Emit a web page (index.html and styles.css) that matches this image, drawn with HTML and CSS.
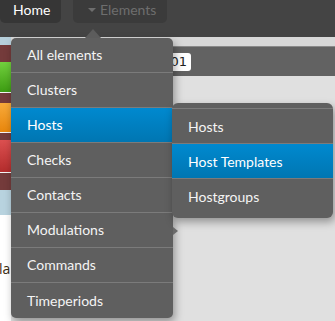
FILE: index.html
```html
<!DOCTYPE html>
<html>
<head>
<meta charset="utf-8">
<link rel="stylesheet" href="styles.css">
</head>
<body>
<div class="navbar">
  <a class="nav-btn home">Home</a>
  <a class="nav-btn elements"><span class="caret-down"></span>Elements</a>
</div>
<div class="page">
  <div class="strip">
    <div class="s s-blue1"></div>
    <div class="s s-dark h17"></div>
    <div class="s s-green"></div>
    <div class="s s-white1"></div>
    <div class="s s-dark h10"></div>
    <div class="s s-orange"></div>
    <div class="s s-white1"></div>
    <div class="s s-dark h7"></div>
    <div class="s s-red"></div>
    <div class="s s-white1"></div>
    <div class="s s-dark h17"></div>
    <div class="s s-blue2"></div>
    <div class="s s-rest"><span class="cut-text">la</span></div>
  </div>
  <div class="main">
    <div class="band-light"></div>
    <div class="band-dark"><span class="tag">01</span></div>
    <div class="main-body"></div>
  </div>
</div>

<div class="dropdown">
  <ul class="menu">
    <li class="item">All elements</li>
    <li class="item">Clusters</li>
    <li class="item active has-sub">Hosts
      <ul class="submenu">
        <li class="sub-item">Hosts</li>
        <li class="sub-item active">Host Templates</li>
        <li class="sub-item">Hostgroups</li>
      </ul>
    </li>
    <li class="item">Checks</li>
    <li class="item">Contacts</li>
    <li class="item has-sub">Modulations</li>
    <li class="item">Commands</li>
    <li class="item">Timeperiods</li>
  </ul>
</div>
</body>
</html>
```
FILE: styles.css
```css
* { box-sizing: border-box; }
html, body { margin: 0; padding: 0; }
body {
  width: 335px;
  height: 321px;
  overflow: hidden;
  position: relative;
  font-family: Lato, "Open Sans", sans-serif;
  font-size: 14px;
  background: #e0e0e0;
}
.navbar {
  height: 37px;
  background: #444444;
  display: flex;
  align-items: flex-start;
}
.nav-btn {
  height: 23px;
  display: flex;
  align-items: center;
  border-radius: 0 0 5px 5px;
  line-height: 1;
}
.home {
  width: 61px;
  padding-left: 13px;
  padding-bottom: 4px;
  background: #363636;
  color: #ffffff;
}
.elements {
  width: 94px;
  margin-left: 12px;
  padding-left: 15px;
  padding-bottom: 4px;
  background: #3b3b3b;
  color: #6e6e6e;
}
.caret-down {
  width: 0; height: 0;
  border-left: 4px solid transparent;
  border-right: 4px solid transparent;
  border-top: 4px solid #6e6e6e;
  margin-right: 4px;
  margin-top: 1px;
}
.page {
  display: flex;
  height: 284px;
}
.strip {
  width: 11px;
  display: flex;
  flex-direction: column;
}
.s { width: 11px; flex: none; }
.s-blue1 { height: 8px; background: #b6cfdb; }
.s-dark { background: #743b3b; }
.h17 { height: 17px; }
.h10 { height: 10px; }
.h7 { height: 7px; }
.s-white1 { height: 1px; background: #f4f4f4; }
.s-green { height: 30px; background: linear-gradient(#72d03e, #3d9c12); }
.s-orange { height: 29px; background: linear-gradient(#f8aa3a, #e8860c); }
.s-red { height: 32px; background: linear-gradient(#dc5050, #b32c2c); }
.s-blue2 { height: 25px; background: #b8d3df; }
.s-rest { flex: 1; background: #ffffff; position: relative; overflow: hidden; }
.cut-text {
  position: absolute;
  left: -1px;
  top: 44px;
  color: #3a2a10;
  font-family: "Open Sans", sans-serif;
  font-size: 14px;
}
.main { flex: 1; display: flex; flex-direction: column; }
.band-light { height: 10px; background: #d8d8d8; border-bottom: 1px solid #8a8a8a; }
.band-dark {
  height: 29px;
  background: #626262;
  display: flex;
  align-items: center;
  padding-left: 150px;
}
.tag {
  background: #ffffff;
  color: #222;
  border-radius: 3px;
  height: 18px;
  width: 30px;
  display: flex;
  align-items: center;
  justify-content: flex-end;
  padding-right: 4px;
  font-family: "DejaVu Sans", sans-serif;
  font-size: 13px;
}
.main-body { flex: 1; background: #e0e0e0; }

.dropdown {
  position: absolute;
  left: 11px;
  top: 38px;
  width: 162px;
}
.dropdown::before {
  content: "";
  position: absolute;
  left: 74px;
  top: -9px;
  border-left: 8px solid transparent;
  border-right: 8px solid transparent;
  border-bottom: 9px solid #5c5c5c;
}
.menu, .submenu {
  list-style: none;
  margin: 0;
  padding: 0;
  background: #5f5f5f;
  color: #f4f4f4;
  box-shadow: 2px 4px 8px rgba(0,0,0,0.35);
}
.menu {
  border-radius: 5px;
  overflow: visible;
}
.item {
  height: 35px;
  padding-left: 16px;
  display: flex;
  align-items: center;
  border-bottom: 1px solid #7b7b7b;
  position: relative;
  padding-bottom: 1px;
}
.item:last-child { border-bottom: none; border-radius: 0 0 5px 5px; }
.item:first-child { border-radius: 5px 5px 0 0; }
.item.active {
  background: linear-gradient(#0089cf, #0076b2);
  color: #ffffff;
}
.has-sub::after {
  content: "";
  position: absolute;
  right: -5px;
  top: 14px;
  border-top: 4px solid transparent;
  border-bottom: 4px solid transparent;
  border-left: 5px solid #6a6a6a;
}
.submenu {
  position: absolute;
  left: 161px;
  top: -5px;
  width: 161px;
  padding: 5px 0;
  border-radius: 6px;
  z-index: 2;
  color: #f4f4f4;
}
.sub-item {
  height: 35px;
  padding-left: 16px;
  display: flex;
  align-items: center;
  border-top: 1px solid #7b7b7b;
}
.sub-item.active {
  background: linear-gradient(#0089cf, #0076b2);
  color: #ffffff;
}
```
